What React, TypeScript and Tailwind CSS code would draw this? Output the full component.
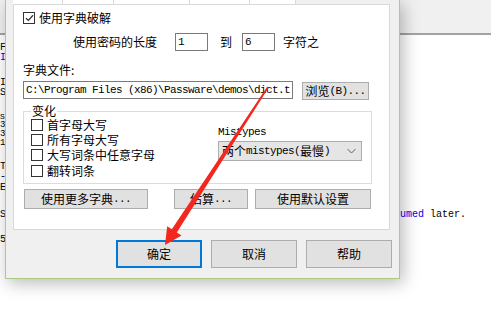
import React from 'react';

const cjk = "font-['Noto_Sans_CJK_SC','Noto_Sans',sans-serif]";
const mono = "font-['Liberation_Mono',monospace] text-[11px] tracking-[-0.6px]";

const Check = ({ checked = false }: { checked?: boolean }) => (
  <span className="w-[12px] h-[12px] border border-[#333333] bg-white flex items-center justify-center shrink-0">
    {checked && (
      <svg width="9" height="8" viewBox="0 0 9 8">
        <path d="M1 4.2 L3.4 6.4 L8 1.2" fill="none" stroke="#333" strokeWidth="1.3" />
      </svg>
    )}
  </span>
);

const Btn = ({ className = '', children }: { className?: string; children: React.ReactNode }) => (
  <div
    className={`bg-[#e1e1e1] border border-[#adadad] flex items-center justify-center text-[12px] leading-none text-black ${className}`}
  >
    {children}
  </div>
);

// underlying editor window, mostly hidden by the dialog
const Background = () => (
  <div className="w-[491px] h-[309px] bg-white">
    <div className="h-[35px] bg-[#f0f0f0] border-b-2 border-[#a3a3a3]" />
    <div className="font-['Liberation_Mono',monospace] text-[10px] text-black">
      <div className="mt-[8px] h-[10px] leading-[10px]">F</div>
      <div className="h-[25px] leading-[10px] text-[#0000ee]">I</div>
      <div className="h-[10px] leading-[10px]">I</div>
      <div className="h-[25px] leading-[10px]">S</div>
      <div className="h-[8px] leading-[8px] text-[8px]">S</div>
      <div className="h-[9px] leading-[9px] text-[9px]">3</div>
      <div className="h-[9px] leading-[9px] text-[9px]">3</div>
      <div className="h-[23px] leading-[9px] text-[9px]">1</div>
      <div className="h-[10px] leading-[10px]">T</div>
      <div className="h-[11px] leading-[10px]">-</div>
      <div className="h-[27px] leading-[10px]">E</div>
      <div className="h-[25px] leading-[10px] flex">
        <span>S</span>
        <span className="ml-[376px] text-[#0000ee]">assumed</span>
        <span>&nbsp;later.</span>
      </div>
      <div className="h-[10px] leading-[10px]">5</div>
    </div>
  </div>
);

const Dialog = () => (
  <div
    className={`absolute left-[5px] top-0 w-[395px] h-[279px] bg-[#f0f0f0] border-x border-b border-[#a9cb84] shadow-[3px_4px_16px_rgba(0,0,0,0.28)] ${cjk} text-[12px] text-black`}
  >
    {/* tab headers (cut off at the top) */}
    <div className="ml-[7px] h-[4px] flex">
      <div className="w-[50px] bg-white border-r border-[#d9d9d9]" />
      <div className="w-[51px] bg-white border-r border-[#d9d9d9]" />
      <div className="w-[76px] bg-white border-r border-[#d9d9d9]" />
      <div className="w-[60px] bg-white border-r border-[#d9d9d9]" />
      <div className="w-[46px] bg-white border-r border-[#d9d9d9]" />
    </div>

    {/* tab page */}
    <div className="ml-[7px] w-[377px] h-[226px] bg-white border border-[#d9d9d9]">
      <div className="mt-[5px] h-[15px] pl-[9px] flex items-center gap-[4px]">
        <Check checked />
        <span className="leading-none">使用字典破解</span>
      </div>

      <div className="mt-[8px] h-[18px] pl-[59px] flex items-center">
        <span className="leading-none">使用密码的长度</span>
        <div className={`ml-[18px] w-[33px] h-[18px] border border-[#7a7a7a] flex items-center pl-[2px] ${mono}`}>1</div>
        <span className="ml-[12px] leading-none">到</span>
        <div className={`ml-[10px] w-[33px] h-[18px] border border-[#7a7a7a] flex items-center pl-[2px] ${mono}`}>6</div>
        <span className="ml-[8px] leading-none">字符之</span>
      </div>

      <div className="mt-[11px] h-[16px] pl-[9px] flex items-center leading-none">字典文件:</div>

      <div className="mt-[3px] pl-[9px] flex items-start">
        <div className={`w-[270px] h-[18px] border border-[#7a7a7a] flex items-center pl-[2px] overflow-hidden whitespace-nowrap ${mono}`}>
          C:\Program Files (x86)\Passware\demos\dict.t
        </div>
        <Btn className="ml-[9px] mt-[1px] w-[67px] h-[18px]">
          浏览<span className={mono}>(B)...</span>
        </Btn>
      </div>

      {/* 变化 group */}
      <div className="relative mt-[11px] ml-[9px] w-[349px] h-[73px] border border-[#dcdcdc] flex pl-[7px]">
        <span className="absolute left-[7px] top-[-9px] bg-white px-[1px] leading-[16px]">变化</span>
        <div className="w-[187px] pt-[5px]">
          <div className="h-[15px] flex items-center gap-[4px]">
            <Check />
            <span className="leading-none">首字母大写</span>
          </div>
          <div className="h-[15px] flex items-center gap-[4px]">
            <Check />
            <span className="leading-none">所有字母大写</span>
          </div>
          <div className="h-[16px] flex items-center gap-[4px]">
            <Check />
            <span className="leading-none">大写词条中任意字母</span>
          </div>
          <div className="h-[15px] flex items-center gap-[4px]">
            <Check />
            <span className="leading-none">翻转词条</span>
          </div>
        </div>
        <div>
          <div className={`mt-[13px] h-[14px] flex items-center ${mono}`}>Mistypes</div>
          <div className="mt-[2px] w-[144px] h-[20px] bg-[#e5e5e5] border border-[#acacac] flex items-center pl-[3px] pr-[5px]">
            <span className="leading-none flex items-center">
              两个<span className={mono}>mistypes(</span>最慢<span className={mono}>)</span>
            </span>
            <svg className="ml-auto" width="9" height="6" viewBox="0 0 9 6">
              <path d="M0.5 1 L4.5 5 L8.5 1" fill="none" stroke="#606060" strokeWidth="1" />
            </svg>
          </div>
        </div>
      </div>

      <div className="mt-[5px] pl-[10px] flex">
        <Btn className="w-[124px] h-[20px]">
          使用更多字典<span className={mono}>...</span>
        </Btn>
        <Btn className="ml-[26px] w-[74px] h-[20px]">
          估算<span className={mono}>...</span>
        </Btn>
        <Btn className="ml-[7px] w-[116px] h-[20px]">使用默认设置</Btn>
      </div>
    </div>

    {/* dialog buttons */}
    <div className="mt-[10px] pl-[110px] flex gap-[9px]">
      <Btn className="w-[86px] h-[28px] !border-2 !border-[#0078d7]">确定</Btn>
      <Btn className="w-[86px] h-[28px]">取消</Btn>
      <Btn className="w-[86px] h-[28px]">帮助</Btn>
    </div>
  </div>
);

export default function App() {
  return (
    <div className="relative w-[491px] h-[309px] overflow-hidden">
      <Background />
      <Dialog />
      {/* red annotation arrow */}
      <svg className="absolute inset-0 pointer-events-none" width="491" height="309" viewBox="0 0 491 309">
        <polygon
          points="268.7,87.4 176.8,232.4 181.5,235.5 165,245 167.2,226.2 171.8,229.2 267.3,86.6"
          fill="#f2271d"
        />
      </svg>
    </div>
  );
}
